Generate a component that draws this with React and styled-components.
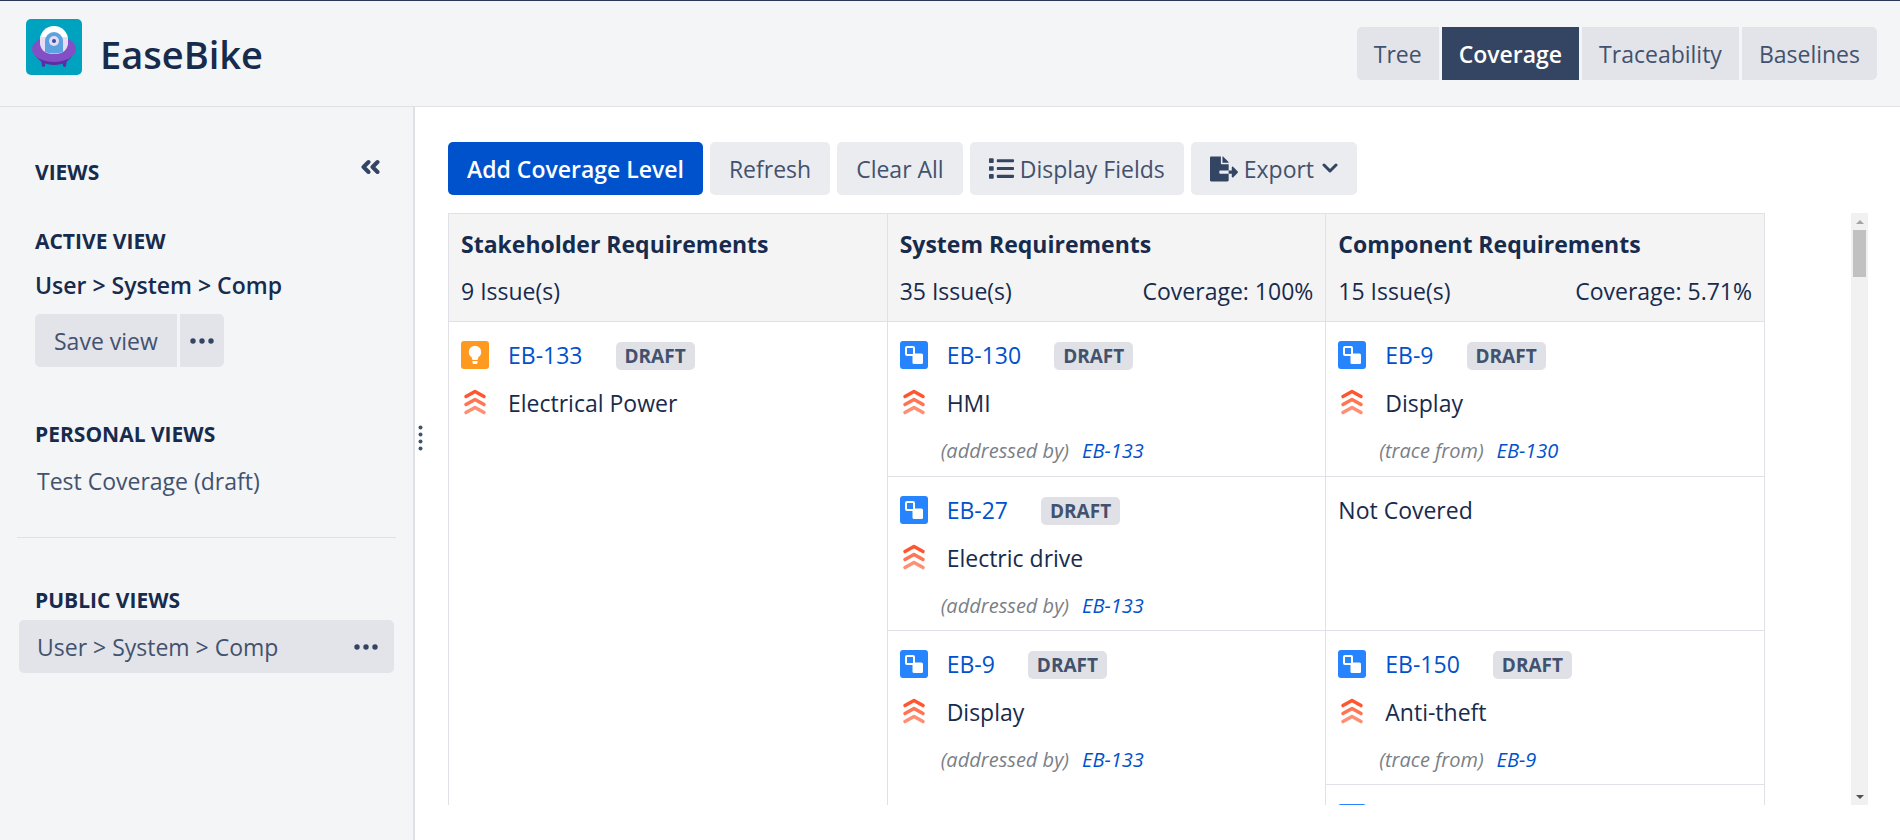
import React, { useState } from "react";
import styled, { createGlobalStyle } from "styled-components";
import { FaFileExport, FaList } from "react-icons/fa";

const GlobalStyle = createGlobalStyle`
  * {
    box-sizing: border-box;
  }
  body {
    margin: 0;
    color: #172b4d;
    background: #fff;
    font-family: "Open Sans", "Noto Sans", sans-serif;
    font-size: 23px;
    line-height: 32px;
  }
  button {
    font: inherit;
    border: none;
    cursor: pointer;
  }
  a {
    color: #0052cc;
    text-decoration: none;
  }
`;

const Page = styled.div`
  display: flex;
  flex-direction: column;
  height: 100vh;
`;
const Header = styled.header`
  display: flex;
  justify-content: space-between;
  flex-shrink: 0;
  height: 107px;
  padding: 18px 23px 0 26px;
  background: #f4f5f7;
  border-top: 1px solid #2b3556;
  border-bottom: 1px solid #dfe1e6;
`;
const Brand = styled.div`
  display: flex;
  gap: 18px;
`;
const Title = styled.h1`
  margin: 0;
  padding-top: 3px;
  font-size: 38px;
  font-weight: 600;
  line-height: 64px;
`;
const Group = styled.div`
  display: flex;
  gap: 3px;
`;
const Nav = styled.nav`
  display: flex;
  gap: 3px;
  padding-top: 8px;
`;
const Btn = styled.button`
  display: flex;
  align-items: center;
  gap: 6px;
  height: 53px;
  padding: 0 ${(p) => (p.$narrow ? 10 : 19)}px;
  color: ${(p) => (p.$active || p.$primary ? "#fff" : "#42526e")};
  background: ${(p) => (p.$primary ? "#0052cc" : p.$active ? "#344563" : p.$muted ? "#ebecf0" : "#e2e4e9")};
  border-radius: 5px;
  font-weight: ${(p) => (p.$primary || p.$active ? 600 : 400)};
  white-space: nowrap;
  svg {
    color: #344563;
  }
  ${Group} &, ${Nav} & {
    border-radius: 0;
  }
  ${Nav} & {
    padding: 0 17px;
  }
  ${Group} &:first-child, ${Nav} &:first-child {
    border-radius: 5px 0 0 5px;
  }
  ${Group} &:last-child, ${Nav} &:last-child {
    border-radius: 0 5px 5px 0;
  }
`;
const Body = styled.div`
  display: flex;
  flex: 1;
  min-height: 0;
`;
const Sidebar = styled.aside`
  flex: 0 0 415px;
  padding: 49px 17px 0;
  background: #f4f5f7;
  border-right: 2px solid #dfe1e6;
`;
const SideHead = styled.div`
  display: flex;
  justify-content: space-between;
  margin-bottom: 37px;
`;
const Label = styled.h2`
  margin: 0;
  padding-left: 18px;
  font-size: 21px;
  font-weight: 700;
  line-height: 32px;
`;
const IconBtn = styled.button`
  display: flex;
  padding: 0 16px;
  color: #344563;
  background: none;
`;
const ActiveView = styled.div`
  display: flex;
  flex-direction: column;
  gap: 13px;
  padding: 12px 18px 51px;
  font-weight: 600;
`;
const View = styled.div`
  display: flex;
  align-items: center;
  justify-content: space-between;
  height: 53px;
  margin: 4px 2px 0;
  padding-left: 18px;
  background: ${(p) => (p.$selected ? "#e2e4e9" : "none")};
  border-radius: 5px;
  a {
    color: #42526e;
  }
`;
const Divider = styled.hr`
  height: 1px;
  margin: 30px 0 46px;
  background: #dfe1e6;
  border: none;
`;
const Handle = styled.div`
  display: flex;
  align-items: center;
  flex: 0 0 33px;
  padding: 0 0 71px 3px;
`;
const Main = styled.main`
  display: flex;
  flex-direction: column;
  flex: 1;
  min-width: 0;
  padding: 35px 32px 35px 0;
`;
const Toolbar = styled.div`
  display: flex;
  gap: 7px;
  margin-bottom: 18px;
`;
const Viewport = styled.div`
  display: flex;
  flex: 1;
  min-height: 0;
`;
const Scroller = styled.div`
  flex: 1;
  padding-right: 86px;
  overflow-y: auto;
  scrollbar-width: none;
`;
const Track = styled.div`
  display: flex;
  flex-direction: column;
  justify-content: space-between;
  align-items: center;
  width: 17px;
  padding: 7px 0 6px;
  background: #f1f1f1;
`;
const Rail = styled.div`
  flex: 1;
  width: 13px;
  margin: 6px 0;
`;
const Thumb = styled.div`
  height: 47px;
  background: #c1c1c1;
`;
const Table = styled.table`
  width: 100%;
  table-layout: fixed;
  border-collapse: collapse;
  th,
  td {
    padding: 9px 12px 0;
    border: 1px solid #dfe1e6;
    vertical-align: top;
    text-align: left;
    font-weight: 400;
    line-height: 48px;
  }
  th {
    height: 108px;
    padding-top: 7px;
    background: #f4f4f5;
    line-height: 47px;
  }
  td {
    height: 154px;
  }
  tbody tr:first-child td {
    height: 155px;
  }
`;
const ColumnName = styled.div`
  font-weight: 700;
`;
const Stats = styled.div`
  display: flex;
  justify-content: space-between;
`;
const Line = styled.div`
  display: flex;
  align-items: center;
  height: 48px;
  svg {
    margin-right: 19px;
  }
`;
const Lozenge = styled.span`
  height: 28px;
  margin: 2px 0 0 33px;
  padding: 0 9px;
  color: #42526e;
  background: #dfe1e6;
  border-radius: 5px;
  font-size: 19px;
  font-weight: 700;
  line-height: 28px;
`;
const Trace = styled.div`
  display: flex;
  gap: 13px;
  padding-left: 41px;
  color: #7a7f87;
  font-size: 20px;
  font-style: italic;
`;

const Logo = () => (
  <svg width="56" height="56" viewBox="0 0 56 56" aria-label="EaseBike logo">
    <rect width="56" height="56" rx="5" fill="#00a3bf" />
    <path d="M15 40h5l-1 7q-2 2-3 0zM41 40h-5l1 7q2 2 3 0z" fill="#5e2ca5" />
    <path d="M8 34q6 12 20 12t20-12z" fill="#5e2ca5" />
    <ellipse cx="28" cy="30" rx="22" ry="13" fill="#8250c4" />
    <path d="M14 21a14 14 0 0 1 28 0v1a14 13 0 0 1-28 0z" fill="#fff" />
    <path d="M14 18h28v5q0 12-14 12T14 23z" fill="#e6dcf3" />
    <path d="M19 22a9 9 0 0 1 18 0v11q-9 3-18 0z" fill="#5ba3e0" />
    <circle cx="28" cy="22" r="5" fill="#e6dcf3" />
    <circle cx="28" cy="22" r="2" fill="#344fa0" />
  </svg>
);

const Dots = () => (
  <svg width="24" height="6" viewBox="0 0 24 6" fill="#344563">
    <circle cx="3" cy="3" r="2.700" />
    <circle cx="12" cy="3" r="2.700" />
    <circle cx="21" cy="3" r="2.700" />
  </svg>
);

const Priority = () => (
  <svg width="28" height="28" viewBox="0 0 28 28" fill="none" strokeWidth="3.600" strokeLinecap="round" strokeLinejoin="round">
    <path d="M5 7.500l9-5 9 5" stroke="#ff5630" />
    <path d="M5 15.500l9-5 9 5" stroke="#ff7452" />
    <path d="M5 23.500l9-5 9 5" stroke="#ff8f73" />
  </svg>
);

const TypeIcon = ({ idea }) =>
  idea ? (
    <svg width="28" height="28" viewBox="0 0 28 28">
      <rect width="28" height="28" rx="3" fill="#ff991f" />
      <path d="M14 5a6 6 0 0 0-3.500 11l1 3h5l1-3A6 6 0 0 0 14 5z" fill="#fff" />
      <path d="M11.500 20h5v1.500a1.500 1.500 0 0 1-1.500 1.500h-2a1.500 1.500 0 0 1-1.500-1.500z" fill="#fff" />
    </svg>
  ) : (
    <svg width="28" height="28" viewBox="0 0 28 28">
      <rect width="28" height="28" rx="3" fill="#2684ff" />
      <rect x="6" y="6" width="8" height="8" rx="1" fill="none" stroke="#fff" strokeWidth="2" />
      <rect x="12.500" y="12.500" width="10.500" height="10.500" rx="1.500" fill="#fff" />
    </svg>
  );

const Issue = ({ id, summary, idea, relation, source }) => (
  <>
    <Line>
      <TypeIcon idea={idea} />
      <a href={"#" + id}>{id}</a>
      <Lozenge>DRAFT</Lozenge>
    </Line>
    <Line>
      <Priority />
      {summary}
    </Line>
    {source && (
      <Trace>
        <span>({relation})</span>
        <a href={"#" + source}>{source}</a>
      </Trace>
    )}
  </>
);

const columns = [
  { name: "Stakeholder Requirements", count: 9 },
  { name: "System Requirements", count: 35, coverage: "100%" },
  { name: "Component Requirements", count: 15, coverage: "5.71%" },
];

const tabs = ["Tree", "Coverage", "Traceability", "Baselines"];

function App() {
  const [tab, setTab] = useState("Coverage");
  const [progress, setProgress] = useState(0);

  const onScroll = (e) => {
    const { scrollTop, scrollHeight, clientHeight } = e.currentTarget;
    setProgress(scrollTop / (scrollHeight - clientHeight));
  };

  return (
    <Page>
      <GlobalStyle />
      <Header>
        <Brand>
          <Logo />
          <Title>EaseBike</Title>
        </Brand>
        <Nav>
          {tabs.map((t) => (
            <Btn key={t} $active={t === tab} onClick={() => setTab(t)}>
              {t}
            </Btn>
          ))}
        </Nav>
      </Header>
      <Body>
        <Sidebar>
          <SideHead>
            <Label>VIEWS</Label>
            <IconBtn aria-label="Collapse sidebar">
              <svg width="20" height="22" viewBox="0 0 20 22" fill="none" stroke="currentColor" strokeWidth="4" strokeLinecap="round" strokeLinejoin="round">
                <path d="M8.500 6l-5 5 5 5M17.500 6l-5 5 5 5" />
              </svg>
            </IconBtn>
          </SideHead>
          <Label>ACTIVE VIEW</Label>
          <ActiveView>
            <span>User &gt; System &gt; Comp</span>
            <Group>
              <Btn>Save view</Btn>
              <Btn $narrow aria-label="More actions">
                <Dots />
              </Btn>
            </Group>
          </ActiveView>
          <Label>PERSONAL VIEWS</Label>
          <View>
            <a href="#test-coverage">Test Coverage (draft)</a>
          </View>
          <Divider />
          <Label>PUBLIC VIEWS</Label>
          <View $selected>
            <a href="#user-system-comp">User &gt; System &gt; Comp</a>
            <IconBtn aria-label="View options">
              <Dots />
            </IconBtn>
          </View>
        </Sidebar>
        <Handle>
          <svg width="5" height="26" viewBox="0 0 5 26" fill="#42526e">
            <circle cx="2.500" cy="2.500" r="2" />
            <circle cx="2.500" cy="9.500" r="2" />
            <circle cx="2.500" cy="16.500" r="2" />
            <circle cx="2.500" cy="23.500" r="2" />
          </svg>
        </Handle>
        <Main>
          <Toolbar>
            <Btn $primary>Add Coverage Level</Btn>
            <Btn $muted>Refresh</Btn>
            <Btn $muted>Clear All</Btn>
            <Btn $muted>
              <FaList size={25} />
              Display Fields
            </Btn>
            <Btn $muted>
              <FaFileExport size={28} />
              Export
              <svg width="18" height="16" viewBox="0 0 18 16" fill="none" stroke="currentColor" strokeWidth="3" strokeLinecap="round" strokeLinejoin="round">
                <path d="M4 4l6 6 6-6" />
              </svg>
            </Btn>
          </Toolbar>
          <Viewport>
            <Scroller onScroll={onScroll}>
              <Table>
                <thead>
                  <tr>
                    {columns.map((c) => (
                      <th key={c.name} scope="col">
                        <ColumnName>{c.name}</ColumnName>
                        <Stats>
                          <span>{c.count} Issue(s)</span>
                          {c.coverage && <span>Coverage: {c.coverage}</span>}
                        </Stats>
                      </th>
                    ))}
                  </tr>
                </thead>
                <tbody>
                  <tr>
                    <td rowSpan={4}>
                      <Issue id="EB-133" summary="Electrical Power" idea />
                    </td>
                    <td>
                      <Issue id="EB-130" summary="HMI" relation="addressed by" source="EB-133" />
                    </td>
                    <td>
                      <Issue id="EB-9" summary="Display" relation="trace from" source="EB-130" />
                    </td>
                  </tr>
                  <tr>
                    <td>
                      <Issue id="EB-27" summary="Electric drive" relation="addressed by" source="EB-133" />
                    </td>
                    <td>Not Covered</td>
                  </tr>
                  <tr>
                    <td rowSpan={2}>
                      <Issue id="EB-9" summary="Display" relation="addressed by" source="EB-133" />
                    </td>
                    <td>
                      <Issue id="EB-150" summary="Anti-theft" relation="trace from" source="EB-9" />
                    </td>
                  </tr>
                  <tr>
                    <td>
                      <Line>
                        <TypeIcon />
                      </Line>
                    </td>
                  </tr>
                </tbody>
              </Table>
            </Scroller>
            <Track>
              <svg width="8" height="4" viewBox="0 0 8 4" fill="#a3a3a3">
                <path d="M0 4l4-4 4 4z" />
              </svg>
              <Rail>
                <Thumb style={{ marginTop: progress * 500 }} />
              </Rail>
              <svg width="8" height="4" viewBox="0 0 8 4" fill="#505050">
                <path d="M0 0l4 4 4-4z" />
              </svg>
            </Track>
          </Viewport>
        </Main>
      </Body>
    </Page>
  );
}

export default App;
